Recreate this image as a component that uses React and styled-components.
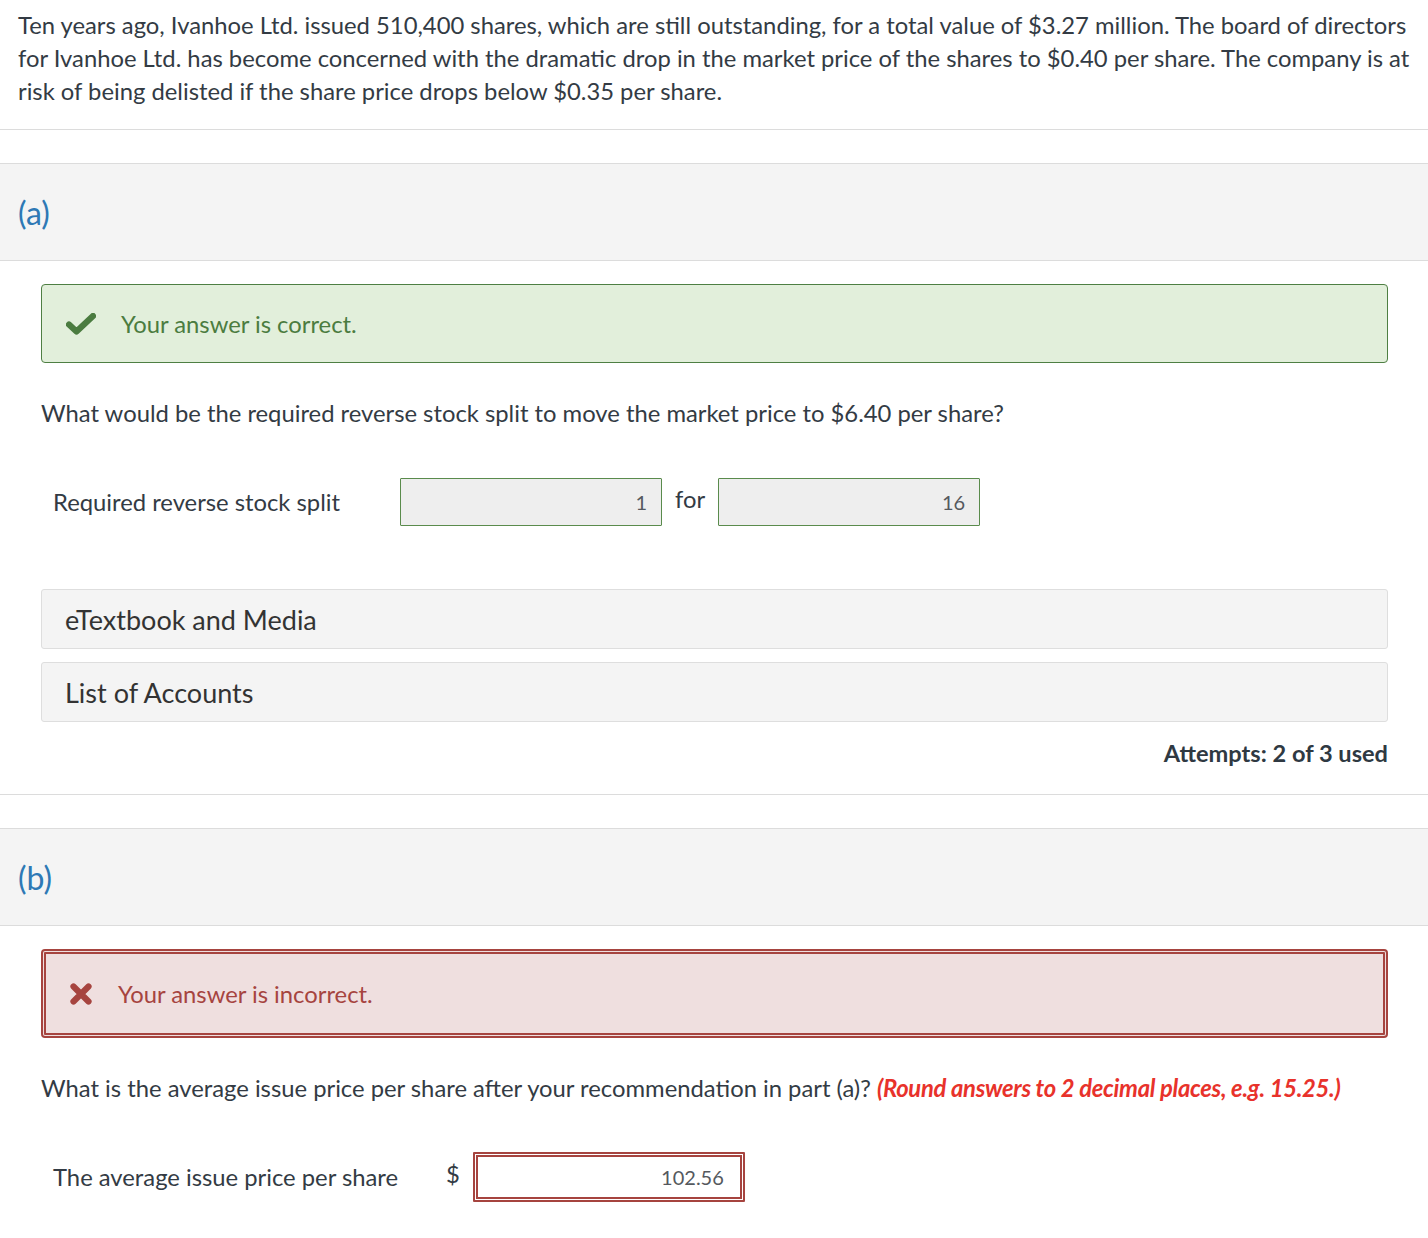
import React from "react";
import styled, { createGlobalStyle } from "styled-components";

const Global = createGlobalStyle`
  body {
    margin: 0;
    background: #ffffff;
    font-family: Lato, "Open Sans", sans-serif;
    color: #333b44;
  }
`;

const Page = styled.div`
  width: 1428px;
`;

const Intro = styled.p`
  margin: 0;
  padding: 9px 18px 21px 18px;
  font-size: 23.8px;
  line-height: 33px;
  border-bottom: 1px solid #dcdcdc;
`;

const Part = styled.section`
  margin-top: 33px;
  border-bottom: 1px solid #dcdcdc;
`;

const PartHeader = styled.div`
  display: flex;
  align-items: center;
  height: 96px;
  padding-left: 18px;
  background: #f4f4f4;
  border-top: 1px solid #dcdcdc;
  border-bottom: 1px solid #dcdcdc;
  color: #2e79b5;
  font-size: 32px;
`;

const PartBody = styled.div`
  padding: 23px 40px 0 41px;
`;

const Alert = styled.div`
  display: flex;
  align-items: center;
  gap: 25px;
  box-sizing: border-box;
  height: ${(p) => (p.$ok ? "79px" : "89px")};
  padding-left: ${(p) => (p.$ok ? "24px" : "23px")};
  border-radius: 4px;
  font-size: 23.8px;
  color: ${(p) => (p.$ok ? "#4b7c40" : "#a6443f")};
  background: ${(p) => (p.$ok ? "#e2efdb" : "#efdfdf")};
  border: ${(p) => (p.$ok ? "1px solid #4e7f43" : "5px double #a6443f")};
`;

const Question = styled.p`
  margin: 34px 0 0 0;
  font-size: 23.8px;
  line-height: 33px;
`;

const Hint = styled.em`
  color: #e8322b;
  font-weight: 700;
  letter-spacing: -0.3px;
`;

const AnswerRow = styled.div`
  display: flex;
  align-items: center;
  margin-top: ${(p) => p.$mt}px;
  padding-left: 12px;
  font-size: 23.8px;
`;

const Label = styled.span`
  width: ${(p) => p.$w}px;
  flex-shrink: 0;
`;

const Field = styled.div`
  box-sizing: border-box;
  width: ${(p) => p.$w}px;
  height: ${(p) => p.$h}px;
  padding-right: ${(p) => (p.$wrong ? "16px" : "14px")};
  display: flex;
  align-items: center;
  justify-content: flex-end;
  font-size: 20px;
  color: #55595e;
  background: ${(p) => (p.$wrong ? "#ffffff" : "#eeeeee")};
  border: ${(p) => (p.$wrong ? "5px double #a6443f" : "1px solid #5a8b4c")};
  border-radius: 1px;
`;

const Joiner = styled.span`
  margin: 0 13px;
  position: relative;
  top: -3px;
`;

const Dollar = styled.span`
  margin-right: 13px;
  position: relative;
  top: -3px;
`;

const Resource = styled.div`
  box-sizing: border-box;
  height: 60px;
  margin-top: ${(p) => p.$mt}px;
  padding-left: 23px;
  display: flex;
  align-items: center;
  background: #f4f4f4;
  border: 1px solid #dedede;
  border-radius: 3px;
  font-size: 27px;
  color: #333;
`;

const Attempts = styled.div`
  margin-top: 15px;
  padding-bottom: 24px;
  text-align: right;
  font-size: 23.6px;
  line-height: 33px;
  font-weight: 700;
  color: #2f3942;
`;

const BodyEnd = styled.div`
  height: 60px;
`;

const Check = () => (
  <svg width="30" height="22" viewBox="0 0 30 22">
    <path
      d="M3 11.5 L10.5 18.5 L27 3"
      fill="none"
      stroke="#4b7c40"
      strokeWidth="6.2"
      strokeLinecap="round"
      strokeLinejoin="round"
    />
  </svg>
);

const Cross = () => (
  <svg width="24" height="24" viewBox="0 0 24 24">
    <path
      d="M4.5 4.5 L19.5 19.5 M19.5 4.5 L4.5 19.5"
      stroke="#a6443f"
      strokeWidth="6.2"
      strokeLinecap="round"
    />
  </svg>
);

export default function App() {
  return (
    <Page>
      <Global />
      <Intro>
        Ten years ago, Ivanhoe Ltd. issued 510,400 shares, which are still
        outstanding, for a total value of $3.27 million. The board of directors
        for Ivanhoe Ltd. has become concerned with the dramatic drop in the
        market price of the shares to $0.40 per share. The company is at risk of
        being delisted if the share price drops below $0.35 per share.
      </Intro>

      <Part>
        <PartHeader>(a)</PartHeader>
        <PartBody>
          <Alert $ok>
            <Check />
            Your answer is correct.
          </Alert>
          <Question>
            What would be the required reverse stock split to move the market
            price to $6.40 per share?
          </Question>
          <AnswerRow $mt={48}>
            <Label $w={347}>Required reverse stock split</Label>
            <Field $w={262} $h={48}>1</Field>
            <Joiner>for</Joiner>
            <Field $w={262} $h={48}>16</Field>
          </AnswerRow>
          <Resource $mt={63}>eTextbook and Media</Resource>
          <Resource $mt={13}>List of Accounts</Resource>
          <Attempts>Attempts: 2 of 3 used</Attempts>
        </PartBody>
      </Part>

      <Part>
        <PartHeader>(b)</PartHeader>
        <PartBody>
          <Alert>
            <Cross />
            Your answer is incorrect.
          </Alert>
          <Question>
            What is the average issue price per share after your recommendation
            in part (a)? <Hint>(Round answers to 2 decimal places, e.g. 15.25.)</Hint>
          </Question>
          <AnswerRow $mt={47}>
            <Label $w={393}>The average issue price per share</Label>
            <Dollar>$</Dollar>
            <Field $w={272} $h={50} $wrong>102.56</Field>
          </AnswerRow>
          <BodyEnd />
        </PartBody>
      </Part>
    </Page>
  );
}
